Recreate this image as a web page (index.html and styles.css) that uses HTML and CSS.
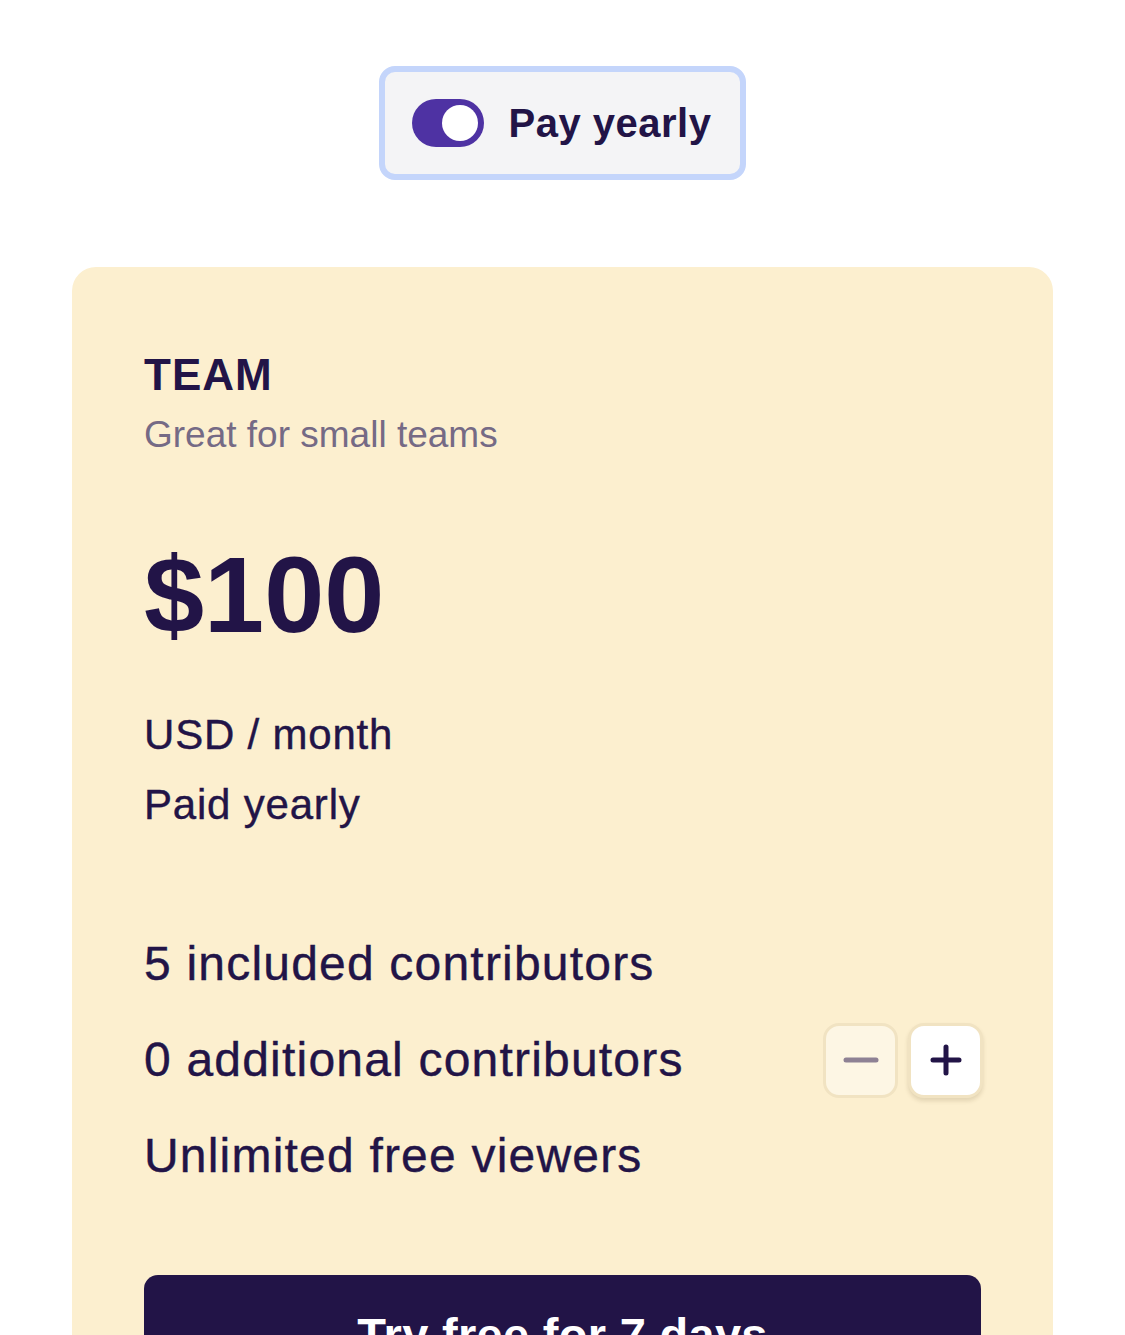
FILE: index.html
```html
<!DOCTYPE html>
<html lang="en">
<head>
    <meta charset="UTF-8">
    <meta name="viewport" content="width=device-width, initial-scale=1.0">
    <title>Pricing</title>
    <link rel="stylesheet" href="styles.css">
</head>
<body>
    <div class="page">
        <!-- Billing period switch -->
        <label class="billing-toggle">
            <span class="switch"><span class="knob"></span></span>
            <span class="billing-label">Pay yearly</span>
        </label>

        <!-- Plan card -->
        <div class="plan-card">
            <h2 class="plan-name">TEAM</h2>
            <p class="plan-desc">Great for small teams</p>

            <div class="price">$100</div>
            <p class="price-unit">USD / month</p>
            <p class="price-unit">Paid yearly</p>

            <ul class="features">
                <li>5 included contributors</li>
                <li class="feature-row">
                    <span>0 additional contributors</span>
                    <span class="stepper">
                        <button class="step-btn step-minus" aria-label="Remove contributor">
                            <svg width="36" height="6" viewBox="0 0 36 6"><line x1="3" y1="3" x2="33" y2="3" stroke="#8e8194" stroke-width="5" stroke-linecap="round"/></svg>
                        </button>
                        <button class="step-btn step-plus" aria-label="Add contributor">
                            <svg width="32" height="32" viewBox="0 0 32 32"><path d="M16 3v26M3 16h26" stroke="#221447" stroke-width="5" stroke-linecap="round"/></svg>
                        </button>
                    </span>
                </li>
                <li>Unlimited free viewers</li>
            </ul>

            <button class="trial-btn">Try free for 7 days</button>
        </div>
    </div>
</body>
</html>
```

FILE: styles.css
```css
* {
    margin: 0;
    padding: 0;
    box-sizing: border-box;
}

body {
    font-family: 'Liberation Sans', Arial, sans-serif;
    background-color: #ffffff;
    color: #221447;
    overflow: hidden;
}

.page {
    display: flex;
    flex-direction: column;
    align-items: center;
    padding: 66px 72px 0;
    gap: 87px;
}

/* Interruptor de facturación */
.billing-toggle {
    display: flex;
    align-items: center;
    gap: 25px;
    height: 114px;
    padding: 0 29px 0 27px;
    background-color: #f4f4f6;
    border: 6px solid #c4d5fb;
    border-radius: 16px;
}

.switch {
    display: flex;
    align-items: center;
    justify-content: flex-end;
    width: 72px;
    height: 48px;
    padding: 0 6px;
    background-color: #4e32a3;
    border-radius: 24px;
}

.knob {
    width: 36px;
    height: 36px;
    background-color: #ffffff;
    border-radius: 50%;
}

.billing-label {
    font-size: 40px;
    font-weight: 700;
    line-height: 48px;
    letter-spacing: 0.5px;
}

/* Tarjeta del plan */
.plan-card {
    width: 100%;
    background-color: #fcefcf;
    border-radius: 24px;
    padding: 82px 72px 72px;
    display: flex;
    flex-direction: column;
}

.plan-name {
    font-size: 44px;
    font-weight: 700;
    line-height: 52px;
    letter-spacing: 1px;
}

.plan-desc {
    margin-top: 12px;
    font-size: 37px;
    line-height: 44px;
    color: #756a85;
}

.price {
    margin-top: 78px;
    font-size: 108px;
    font-weight: 700;
    line-height: 120px;
}

.price-unit {
    font-size: 42px;
    line-height: 70px;
    letter-spacing: 0.8px;
    -webkit-text-stroke: 0.4px currentColor;
}

.price + .price-unit {
    margin-top: 45px;
}

.features {
    list-style: none;
    margin-top: 76px;
}

.features li {
    font-size: 48px;
    line-height: 96px;
    letter-spacing: 1.2px;
    -webkit-text-stroke: 0.4px currentColor;
}

.feature-row {
    display: flex;
    justify-content: space-between;
    align-items: center;
}

.stepper {
    display: flex;
    gap: 10px;
    margin-right: -2px;
}

.step-btn {
    display: flex;
    align-items: center;
    justify-content: center;
    width: 75px;
    height: 75px;
    border-radius: 16px;
    border: 3px solid #f1e3c2;
    cursor: pointer;
}

.step-minus {
    background-color: #fdf6e4;
}

.step-plus {
    background-color: #ffffff;
    box-shadow: 0 3px 4px rgba(80, 60, 20, 0.15);
}

.trial-btn {
    margin-top: 71px;
    padding: 32px 20px;
    background-color: #221447;
    color: #ffffff;
    border: none;
    border-radius: 14px;
    font-family: inherit;
    font-size: 47px;
    font-weight: 700;
    line-height: 56px;
    letter-spacing: 0.3px;
    cursor: pointer;
}
```
